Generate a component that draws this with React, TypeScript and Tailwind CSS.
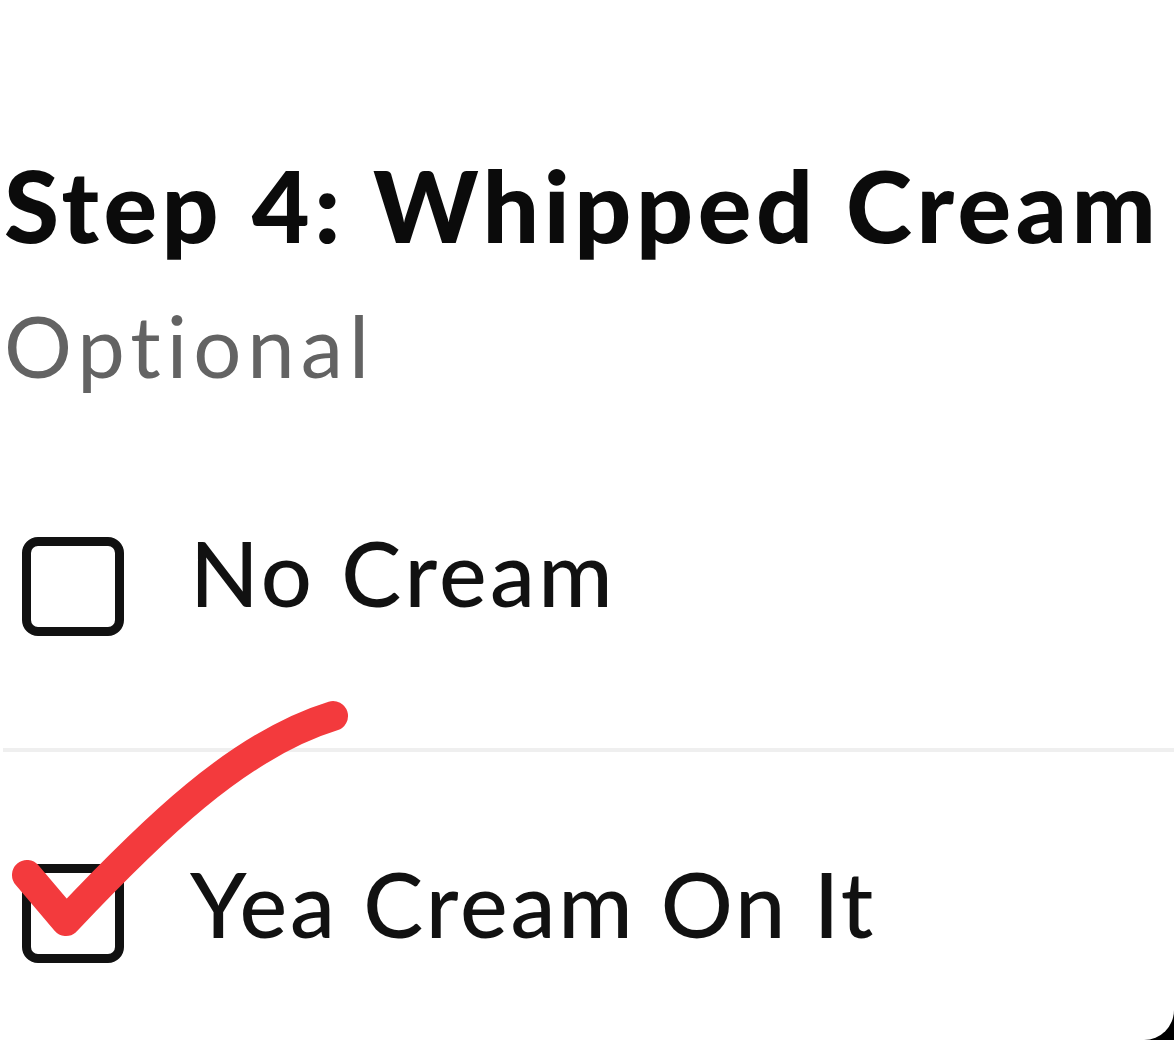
import React from "react";

function Box() {
  return (
    <div className="w-[102px] h-[99px] shrink-0 rounded-[16px] border-[9px] border-[#111111] bg-white" />
  );
}

function Option({ label, boxOffset, tracking }: { label: string; boxOffset: string; tracking: string }) {
  return (
    <div className="flex items-start pl-[18px]">
      <div className={boxOffset}>
        <Box />
      </div>
      <span className={`ml-[66px] text-[90px] font-medium leading-none text-[#111111] ${tracking}`}>{label}</span>
    </div>
  );
}

export default function App() {
  return (
    <div
      className="w-[1174px] h-[1040px] bg-black overflow-hidden [font-variant-ligatures:none]"
      style={{ fontFamily: "Lato, 'Noto Sans', sans-serif" }}
    >
      <div className="relative w-full h-[1040px] bg-white rounded-br-[30px] overflow-hidden">
        <div className="flex flex-col pl-[4px] pt-[154px]">
          <h1 className="text-[100px] font-black leading-none tracking-[4.6px] text-[#0b0b0b] whitespace-nowrap">
            Step 4: Whipped Cream
          </h1>
          <p className="mt-[49px] text-[85px] leading-none tracking-[6px] text-[#636363]">Optional</p>

          <div className="mt-[139px]">
            <Option label="No Cream" boxOffset="mt-[10px]" tracking="tracking-[3.3px]" />
          </div>

          <div className="mt-[112px] ml-[-1px] h-[4px] bg-[#efefef]" />

          <div className="mt-[106px]">
            <Option label="Yea Cream On It" boxOffset="mt-[6px]" tracking="tracking-[2.8px]" />
          </div>
        </div>

        {/* hand-drawn tick over the second option */}
        <svg className="absolute left-0 top-0 pointer-events-none" width="1174" height="1040" viewBox="0 0 1174 1040">
          <path
            d="M27 875 L66 921 C150 832 238 745 333 716"
            fill="none"
            stroke="#f33a3d"
            strokeWidth="30"
            strokeLinecap="round"
            strokeLinejoin="round"
          />
        </svg>
      </div>
    </div>
  );
}
